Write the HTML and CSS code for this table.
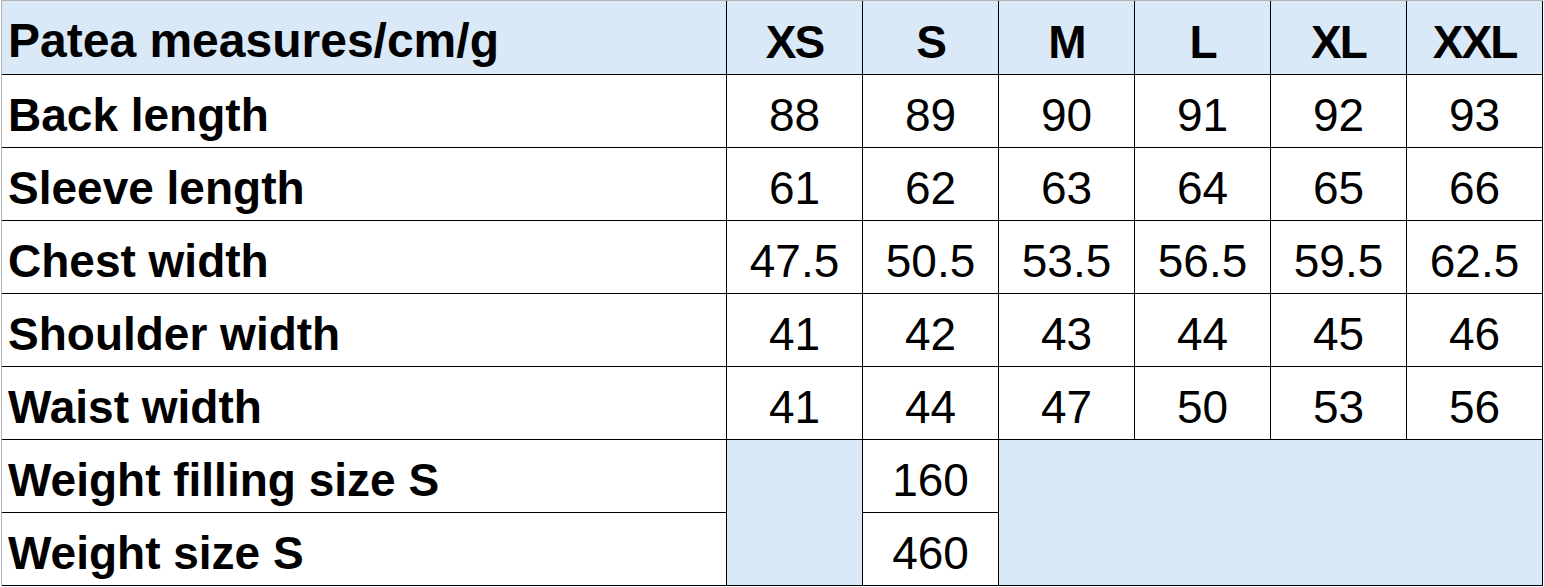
FILE: index.html
```html
<!DOCTYPE html>
<html lang="en">
<head>
<meta charset="utf-8">
<title>Patea measures</title>
<link rel="stylesheet" href="styles.css">
</head>
<body>
<div class="frame">
  <div class="sheet">
    <div class="cell head label">Patea measures/cm/g</div>
    <div class="cell head num">XS</div>
    <div class="cell head num">S</div>
    <div class="cell head num">M</div>
    <div class="cell head num">L</div>
    <div class="cell head num">XL</div>
    <div class="cell head num">XXL</div>

    <div class="cell label">Back length</div>
    <div class="cell val">88</div><div class="cell val">89</div><div class="cell val">90</div><div class="cell val">91</div><div class="cell val">92</div><div class="cell val">93</div>

    <div class="cell label">Sleeve length</div>
    <div class="cell val">61</div><div class="cell val">62</div><div class="cell val">63</div><div class="cell val">64</div><div class="cell val">65</div><div class="cell val">66</div>

    <div class="cell label">Chest width</div>
    <div class="cell val">47.5</div><div class="cell val">50.5</div><div class="cell val">53.5</div><div class="cell val">56.5</div><div class="cell val">59.5</div><div class="cell val">62.5</div>

    <div class="cell label">Shoulder width</div>
    <div class="cell val">41</div><div class="cell val">42</div><div class="cell val">43</div><div class="cell val">44</div><div class="cell val">45</div><div class="cell val">46</div>

    <div class="cell label">Waist width</div>
    <div class="cell val">41</div><div class="cell val">44</div><div class="cell val">47</div><div class="cell val">50</div><div class="cell val">53</div><div class="cell val">56</div>

    <div class="cell label">Weight filling size S</div>
    <div class="cell blank blank-xs"></div>
    <div class="cell val">160</div>
    <div class="cell blank blank-rest"></div>

    <div class="cell label">Weight size S</div>
    <div class="cell val">460</div>
  </div>
</div>
</body>
</html>
```

FILE: styles.css
```css
html, body {
  margin: 0;
  padding: 0;
  background: #ffffff;
}

.frame {
  margin-left: 1px;
  width: 1542px;
  border-top: 1px solid #b4b4b4;
  border-left: 1px solid #b4b4b4;
  box-sizing: border-box;
}

.sheet {
  display: grid;
  grid-template-columns: 724px repeat(6, 135px);
  grid-template-rows: 73px repeat(7, 72px);
  gap: 1px;
  background: #000000;
  padding: 0 1px 1px 0;
  width: max-content;
}

.cell {
  background: #ffffff;
  color: #000000;
  display: flex;
  align-items: flex-end;
  padding-bottom: 9px;
  box-sizing: border-box;
  line-height: 1;
  white-space: nowrap;
}

.head {
  background: #dae9f8;
  font-family: "Liberation Sans", Arial, sans-serif;
  font-weight: 700;
  font-size: 48px;
}

.label {
  font-family: "Liberation Sans", Arial, sans-serif;
  font-weight: 700;
  font-size: 46px;
  padding-left: 6px;
}

.head.label {
  font-size: 48px;
}

.num {
  justify-content: center;
}

.head.num {
  font-size: 46px;
  letter-spacing: -2px;
}

.val {
  justify-content: center;
  font-family: "Liberation Sans", Arial, sans-serif;
  font-weight: 400;
  font-size: 46px;
}

.blank {
  background: #dae9f8;
}

.blank-xs {
  grid-column: 2;
  grid-row: 7 / span 2;
}

.blank-rest {
  grid-column: 4 / span 4;
  grid-row: 7 / span 2;
}
```
